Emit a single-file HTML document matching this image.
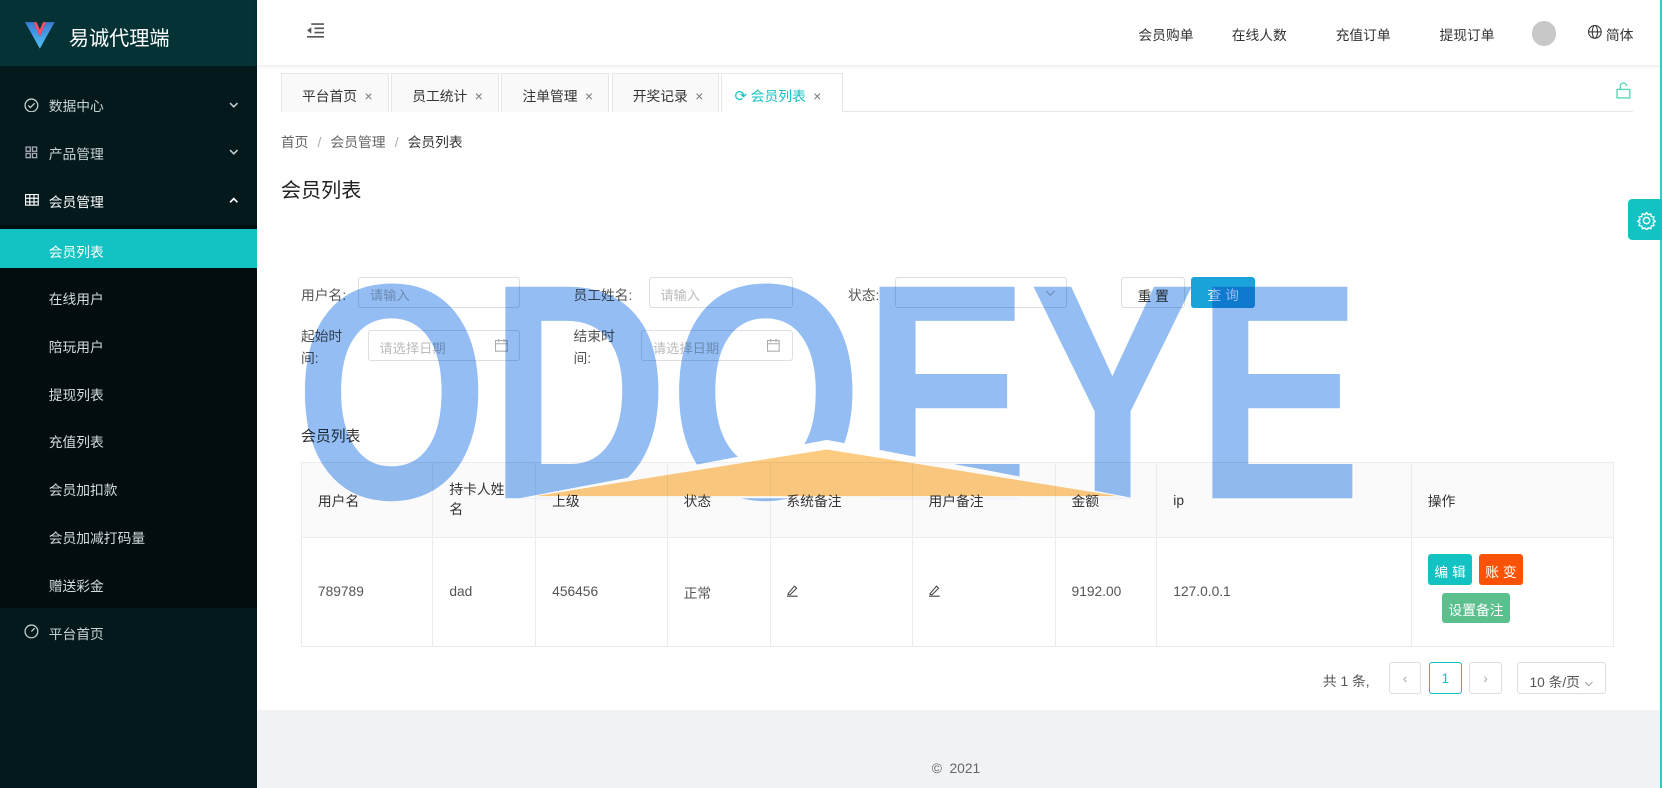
<!DOCTYPE html>
<html><head><meta charset="utf-8">
<style>
html{zoom:1.06}
*{box-sizing:border-box;margin:0;padding:0}
body{width:1568px;height:743px;overflow:hidden;font-family:"Liberation Sans","Noto Sans CJK SC",sans-serif;font-size:13px;color:#333;background:#fff;position:relative}
.abs{position:absolute}
.side{left:0;top:0;width:242px;height:743px;background:#04191c}
.logo{left:0;top:0;width:242px;height:62px;background:#053235}
.logo span{position:absolute;left:65px;top:21px;color:#fff;font-size:19px}
.mi{position:absolute;left:0;width:242px;height:45px;color:#c9d1d2;font-size:13px}
.mi .t{position:absolute;left:46px;top:14px}
.sub{left:0;top:212px;width:242px;height:362px;background:#010d0f}
.si{position:absolute;left:46px;color:#d5dcdd;font-size:13px}
.hdr{left:242px;top:0;width:1326px;height:61px;background:#fff;box-shadow:0 1px 4px rgba(0,0,0,.1)}
.hdr .n{position:absolute;top:23px;font-size:13px;color:#333}
.tab{position:absolute;top:69px;height:37px;border:1px solid #e6e6e6;border-bottom:none;background:#f9f9f9;font-size:13px;color:#333;padding:10px 0 0 19px}
.tab i{font-style:normal;color:#777;margin-left:7px}
.lbl{position:absolute;font-size:13px;color:#555}
.inp{position:absolute;height:30px;border:1px solid #dcdfe6;border-radius:3px;color:#bbb;font-size:12.5px;padding:7px 0 0 10px}
table{border-collapse:collapse;position:absolute;left:284px;top:436px;width:1239px}
td{border:1px solid #ececec;font-size:13px;color:#555;padding-left:15px}
tr.h td{background:#fafafa;height:71px;color:#333}
tr.b td{height:102px}
.btn{position:absolute;color:#fff;font-size:13px;border-radius:3px;text-align:center}
.pg{position:absolute;top:625px;height:30px;border:1px solid #dcdfe6;border-radius:3px;text-align:center;padding-top:7px;color:#aaa}
</style></head><body>
<div class="abs side"></div>
<div class="abs logo">
<svg class="abs" style="left:24px;top:19px" width="28" height="27" viewBox="0 0 28 27"><defs><linearGradient id="g" x1="0" y1="0" x2="0" y2="1"><stop offset="0" stop-color="#3a7bd5"/><stop offset="1" stop-color="#4fc3f7"/></linearGradient></defs><path d="M0 2H8L14 16L20 2H28L14 27Z" fill="url(#g)"/><path d="M8 2L14 16L20 2H17L14 9L11 2Z" fill="#f0506e"/></svg>
<span>易诚代理端</span></div>
<div class="mi" style="top:76px"><svg class="abs" style="left:23px;top:16px" width="14" height="14"><circle cx="7" cy="7" r="6" fill="none" stroke="#c9d1d2" stroke-width="1.2"/><path d="M4 7l2 2 4-4" fill="none" stroke="#c9d1d2" stroke-width="1.2"/></svg><span class="t">数据中心</span><svg class="abs" style="left:216px;top:20px" width="9" height="6"><path d="M1 1l3.5 3.5L8 1" fill="none" stroke="#c9d1d2" stroke-width="1.4"/></svg></div>
<div class="mi" style="top:121px"><svg class="abs" style="left:24px;top:17px" width="12" height="12"><g fill="none" stroke="#aab" stroke-width="1.2"><rect x="1" y="1" width="4" height="4"/><rect x="7" y="1" width="4" height="4"/><rect x="1" y="7" width="4" height="4"/><rect x="7" y="7" width="4" height="4"/></g></svg><span class="t">产品管理</span><svg class="abs" style="left:216px;top:20px" width="9" height="6"><path d="M1 1l3.5 3.5L8 1" fill="none" stroke="#c9d1d2" stroke-width="1.4"/></svg></div>
<div class="mi" style="top:166px;color:#fff"><svg class="abs" style="left:24px;top:17px" width="13" height="11"><g fill="none" stroke="#fff" stroke-width="1.1"><rect x=".5" y=".5" width="12" height="10"/><path d="M.5 4h12M.5 7.5h12M4.5 .5v10M8.5 .5v10"/></g></svg><span class="t">会员管理</span><svg class="abs" style="left:216px;top:20px" width="9" height="6"><path d="M1 5l3.5-3.5L8 5" fill="none" stroke="#fff" stroke-width="1.6"/></svg></div>
<div class="abs sub"></div>
<div class="abs" style="left:0;top:216px;width:242px;height:37px;background:#13c2c2"></div>
<div class="si" style="top:227px;color:#fff">会员列表</div>
<div class="si" style="top:272px">在线用户</div>
<div class="si" style="top:317px">陪玩用户</div>
<div class="si" style="top:362px">提现列表</div>
<div class="si" style="top:407px">充值列表</div>
<div class="si" style="top:452px">会员加扣款</div>
<div class="si" style="top:497px">会员加减打码量</div>
<div class="si" style="top:542px">赠送彩金</div>
<div class="mi" style="top:574px"><svg class="abs" style="left:23px;top:15px" width="14" height="14"><circle cx="7" cy="7" r="6" fill="none" stroke="#c9d1d2" stroke-width="1.2"/><path d="M7 7l3-3" stroke="#c9d1d2" stroke-width="1.2"/></svg><span class="t">平台首页</span></div>

<div class="abs hdr">
<svg class="abs" style="left:47px;top:22px" width="17" height="14"><g stroke="#555" stroke-width="1.5"><path d="M5 1h12M8 5h9M8 9h9M1 13h16"/></g><path d="M1 7l4-3v6z" fill="#555"/></svg>
<span class="n" style="left:832px">会员购单</span><span class="n" style="left:920px">在线人数</span><span class="n" style="left:1018px">充值订单</span><span class="n" style="left:1116px">提现订单</span>
<div class="abs" style="left:1203px;top:20px;width:23px;height:23px;border-radius:50%;background:#c8c8c8"></div>
<svg class="abs" style="left:1256px;top:24px" width="13" height="13"><g fill="none" stroke="#333" stroke-width="1"><circle cx="6.5" cy="6.5" r="6"/><ellipse cx="6.5" cy="6.5" rx="2.5" ry="6"/><path d="M.5 6.5h12"/></g></svg>
<span class="n" style="left:1273px">简体</span></div>
<div class="abs" style="left:1566px;top:0;width:2px;height:743px;background:#3cc"></div>

<div class="tab" style="left:265px;width:102px">平台首页<i>×</i></div>
<div class="tab" style="left:369px;width:102px">员工统计<i>×</i></div>
<div class="tab" style="left:473px;width:102px">注单管理<i>×</i></div>
<div class="tab" style="left:577px;width:101px">开奖记录<i>×</i></div>
<div class="tab" style="left:680px;width:115px;background:#fff;color:#13c2c2;padding-left:12px"><span style="font-size:14px">&#10227;</span> 会员列表<i>×</i></div>
<div class="abs" style="left:795px;top:105px;width:746px;height:1px;background:#e6e6e6"></div>
<svg class="abs" style="left:1525px;top:77px" width="14" height="16"><rect x="1" y="7" width="12" height="8" fill="none" stroke="#5cd6b8" stroke-width="1.3"/><path d="M4 7V4a3 3 0 0 1 6 0" fill="none" stroke="#5cd6b8" stroke-width="1.3"/></svg>

<div class="abs" style="left:265px;top:124px;color:#666">首页 <span style="margin:0 5px;color:#aaa">/</span> 会员管理 <span style="margin:0 5px;color:#aaa">/</span> <span style="color:#333">会员列表</span></div>
<div class="abs" style="left:265px;top:164px;font-size:19px;color:#222">会员列表</div>
<div class="abs" style="left:1536px;top:188px;width:32px;height:38px;background:#13c2c2;border-radius:4px 0 0 4px"><svg class="abs" style="left:8px;top:11px" width="18" height="18" viewBox="0 0 18 18"><circle cx="9" cy="9" r="3" fill="none" stroke="#fff" stroke-width="1.4"/><path d="M9 1.5l1.6 2 2.4-.8.5 2.5 2.5.5-.8 2.4 2 1.6-2 1.6.8 2.4-2.5.5-.5 2.5-2.4-.8-1.6 2-1.6-2-2.4.8-.5-2.5-2.5-.5.8-2.4-2-1.6 2-1.6-.8-2.4 2.5-.5.5-2.5 2.4.8z" fill="none" stroke="#fff" stroke-width="1.3"/></svg></div>

<div class="lbl" style="left:284px;top:268px">用户名:</div>
<div class="inp" style="left:338px;top:261px;width:153px">请输入</div>
<div class="lbl" style="left:541px;top:268px">员工姓名:</div>
<div class="inp" style="left:612px;top:261px;width:136px">请输入</div>
<div class="lbl" style="left:800px;top:268px">状态:</div>
<div class="inp" style="left:844px;top:261px;width:163px"><svg class="abs" style="left:141px;top:12px" width="10" height="6"><path d="M1 1l4 4 4-4" fill="none" stroke="#bbb"/></svg></div>
<div class="abs" style="left:1058px;top:261px;width:60px;height:30px;border:1px solid #dcdfe6;border-radius:3px;text-align:center;padding-top:7px;color:#333">重 置</div>
<div class="abs" style="left:1124px;top:261px;width:60px;height:30px;background:#1aa3d8;border-radius:3px;text-align:center;padding-top:7px;color:#fff">查 询</div>
<div class="lbl" style="left:284px;top:308px;line-height:20px">起始时<br>间:</div>
<div class="inp" style="left:347px;top:311px;width:144px">请选择日期<svg class="abs" style="left:119px;top:8px" width="12" height="12"><rect x=".5" y="1.5" width="11" height="10" fill="none" stroke="#aaa"/><path d="M.5 4.5h11M3.5 0v3M8.5 0v3" stroke="#aaa"/></svg></div>
<div class="lbl" style="left:541px;top:308px;line-height:20px">结束时<br>间:</div>
<div class="inp" style="left:605px;top:311px;width:143px">请选择日期<svg class="abs" style="left:118px;top:8px" width="12" height="12"><rect x=".5" y="1.5" width="11" height="10" fill="none" stroke="#aaa"/><path d="M.5 4.5h11M3.5 0v3M8.5 0v3" stroke="#aaa"/></svg></div>

<div class="abs" style="left:284px;top:401px;font-size:14px;color:#333">会员列表</div>
<table>
<tr class="h"><td style="width:124px">用户名</td><td style="width:97px;line-height:19px">持卡人姓<br>名</td><td style="width:124px">上级</td><td style="width:97px">状态</td><td style="width:134px">系统备注</td><td style="width:135px">用户备注</td><td style="width:96px">金额</td><td style="width:240px">ip</td><td>操作</td></tr>
<tr class="b"><td>789789</td><td>dad</td><td>456456</td><td>正常</td><td><svg width="12" height="12"><path d="M2 9L8 2l2 2-6 6H2z M1 11.5h10" fill="none" stroke="#444"/></svg></td><td><svg width="12" height="12"><path d="M2 9L8 2l2 2-6 6H2z M1 11.5h10" fill="none" stroke="#444"/></svg></td><td>9192.00</td><td>127.0.0.1</td><td></td></tr>
</table>
<div class="btn" style="left:1347px;top:523px;width:42px;height:29px;background:#13c2c2;padding-top:6px">编 辑</div>
<div class="btn" style="left:1395px;top:523px;width:42px;height:29px;background:#fa5307;padding-top:6px">账 变</div>
<div class="btn" style="left:1360px;top:559px;width:65px;height:29px;background:#5cbf8e;padding-top:6px">设置备注</div>

<div class="abs" style="left:1248px;top:632px;color:#555">共 1 条,</div>
<div class="pg" style="left:1310px;width:31px">&lsaquo;</div>
<div class="pg" style="left:1348px;width:31px;border-color:#13c2c2;color:#13c2c2">1</div>
<div class="pg" style="left:1386px;width:31px">&rsaquo;</div>
<div class="pg" style="left:1431px;width:84px;color:#555">10 条/页 <svg width="9" height="6"><path d="M1 1l3.5 3.5L8 1" fill="none" stroke="#aaa"/></svg></div>

<div class="abs" style="left:242px;top:670px;width:1324px;height:73px;background:#f0f2f5"></div>
<div class="abs" style="left:879px;top:718px;color:#666">© &nbsp;2021</div>

<svg class="abs" style="left:0;top:0;mix-blend-mode:multiply" width="1568" height="743">
<text x="278" y="470" font-family="Liberation Sans Narrow, Liberation Sans" font-weight="bold" font-size="290" fill="#93bdf3" textLength="1007" lengthAdjust="spacingAndGlyphs" transform="translate(0,470) scale(1,1.0) translate(0,-470)">ODOEYE</text>
<polygon points="490,470 780,415 1070,470" fill="#fff"/>
<polygon points="505,468 780,424 1055,468" fill="#fdcb80"/>
</svg>
</body></html>
